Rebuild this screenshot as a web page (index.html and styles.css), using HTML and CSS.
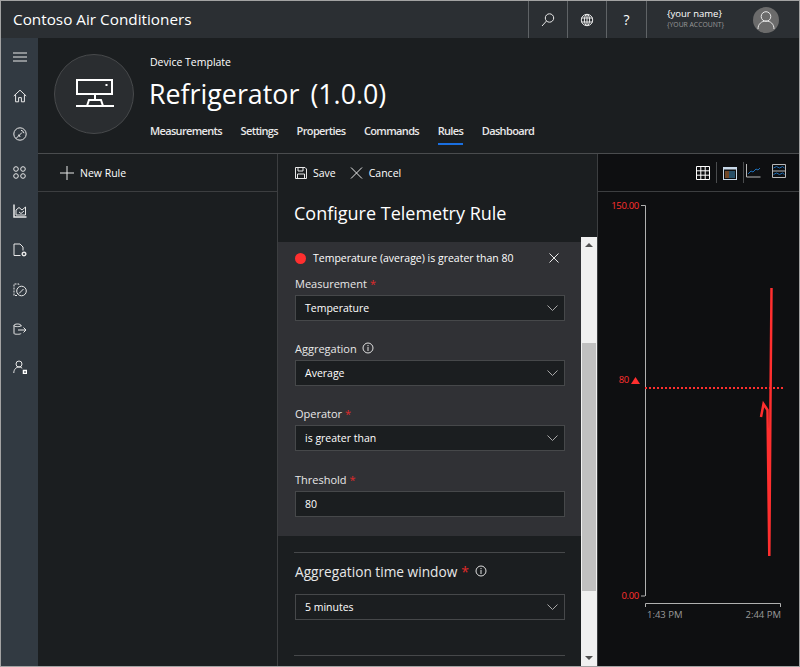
FILE: index.html
```html
<!DOCTYPE html>
<html>

<head>
  <meta charset="UTF-8">
  <title>Contoso Air Conditioners</title>
  <link rel="stylesheet" href="styles.css">
</head>

<body>
  <div class="app">
    <header class="topbar">
      <div class="brand">Contoso Air Conditioners</div>
      <div class="top-btn">
        <svg width="16" height="16" viewBox="0 0 16 16" class="ico"><circle cx="9.5" cy="6" r="4.2"/><path d="M6.5 9L2 14"/></svg>
      </div>
      <div class="top-btn">
        <svg width="14" height="14" viewBox="0 0 14 14" class="ico"><circle cx="7" cy="7" r="5.7"/><ellipse cx="7" cy="7" rx="2.6" ry="5.7"/><path d="M1.3 5h11.4M1.3 9h11.4M7 1.3v11.4"/></svg>
      </div>
      <div class="top-btn help">?</div>
      <div class="account">
        <div class="account-text">
          <div class="account-name">{your name}</div>
          <div class="account-sub">{YOUR ACCOUNT}</div>
        </div>
        <div class="avatar">
          <svg width="20" height="20" viewBox="0 0 20 20" class="ico"><circle cx="10" cy="6.5" r="4.8"/><path d="M2 19c0-5 3.5-8 8-8s8 3 8 8"/></svg>
        </div>
      </div>
    </header>

    <div class="body-row">
      <nav class="sidebar">
        <div class="nav-item"><svg width="14" height="10" viewBox="0 0 14 10" class="ico"><path d="M0 1h14M0 5h14M0 9h14"/></svg></div>
        <div class="nav-item"><svg width="14" height="14" viewBox="0 0 14 14" class="ico"><path d="M.8 7L7 1.2 13.2 7M2.6 5.6v7.2h3V8.6h2.8v4.2h3V5.6"/></svg></div>
        <div class="nav-item"><svg width="14" height="14" viewBox="0 0 14 14" class="ico"><circle cx="7" cy="7" r="6.2"/><path d="M3 11.500L9 5.500M8 3.200a4 4 0 0 1 3 3M5 8a2 2 0 0 1 2 2"/></svg></div>
        <div class="nav-item"><svg width="13" height="13" viewBox="0 0 13 13" class="ico"><circle cx="3" cy="3" r="2.3"/><circle cx="10" cy="3" r="2.3"/><circle cx="3" cy="10" r="2.3"/><circle cx="10" cy="10" r="2.3"/></svg></div>
        <div class="nav-item"><svg width="14" height="14" viewBox="0 0 14 14" class="ico"><path d="M1 .5v12.500h12.500" stroke-width="1.500"/><path d="M3 11V6l3-2.500 3 2.500 3.500-3v8z"/><path d="M6 8l2 1.500 3-2.500"/></svg></div>
        <div class="nav-item"><svg width="14" height="14" viewBox="0 0 14 14" class="ico"><path d="M7.500 12.500H1V1h6l3 3v3.500"/><circle cx="11" cy="11" r="1.800" stroke-width="1.400"/></svg></div>
        <div class="nav-item nav-gap"><svg width="14" height="14" viewBox="0 0 14 14" class="ico"><path d="M4 12.500H1V1h5v1.500" stroke-dasharray="2 1"/><circle cx="8.500" cy="8" r="4.800"/><path d="M6 10.500l4.500-4.500"/></svg></div>
        <div class="nav-item"><svg width="14" height="14" viewBox="0 0 14 14" class="ico"><path d="M1 3.500v8c0 1 7 1 7 0M1 3.500c0-2 7-2 7 0v1M1 3.500c0 1.500 7 1.500 7 0M5 8h8M10.500 5.500L13 8l-2.500 2.500"/></svg></div>
        <div class="nav-item"><svg width="14" height="14" viewBox="0 0 14 14" class="ico"><circle cx="6" cy="4" r="3"/><path d="M.8 13c0-3.500 2.300-6 5.200-6 1.300 0 2.400.4 3.200 1.200"/><rect x="10.500" y="10.500" width="3" height="3" stroke="#fff" stroke-width="1.500"/></svg></div>
      </nav>

      <main class="content">
        <section class="template-head">
          <div class="device-circle">
            <svg width="38" height="29" viewBox="0 0 38 29" class="device-ico"><rect x="1" y="1" width="35" height="14"/><path d="M19 15v6M11 27l2-6h12l2 6zM0 27h11M27 27h11"/><rect x="29.500" y="5" width="2" height="2" fill="#fff" stroke="none"/></svg>
          </div>
          <div class="head-text">
            <div class="crumb">Device Template</div>
            <h1 class="device-name"><span>Refrigerator</span><span>(1.0.0)</span></h1>
            <div class="tabs">
              <a class="tab">Measurements</a>
              <a class="tab">Settings</a>
              <a class="tab">Properties</a>
              <a class="tab">Commands</a>
              <a class="tab active">Rules</a>
              <a class="tab">Dashboard</a>
            </div>
          </div>
        </section>

        <section class="columns">
          <div class="rule-list">
            <div class="new-rule">
              <svg width="14" height="14" viewBox="0 0 14 14" class="ico"><path d="M7 0v14M0 7h14"/></svg>
              <span>New Rule</span>
            </div>
          </div>

          <div class="editor">
            <div class="editor-bar">
              <span class="bar-btn">
                <svg width="12" height="12" viewBox="0 0 12 12" class="ico"><path d="M.5.500h9.500l1.500 1.500v9.500H.5zM3 .5v3.500h5V.5M2.500 11.500V7h7v4.500"/></svg>
                Save
              </span>
              <span class="bar-btn">
                <svg width="13" height="12" viewBox="0 0 13 12" class="ico"><path d="M1 .5l11 11M12 .5l-11 11"/></svg>
                Cancel
              </span>
            </div>
            <h2 class="editor-title">Configure Telemetry Rule</h2>

            <div class="scroll-wrap">
              <div class="form-area">
                <div class="rule-card">
                  <div class="rule-head">
                    <span class="dot"></span>
                    <span class="rule-text">Temperature (average) is greater than 80</span>
                    <svg width="10" height="10" viewBox="0 0 10 10" class="ico close"><path d="M.5.500l9 9M9.500.500l-9 9"/></svg>
                  </div>
                  <label class="field-label first">Measurement <b>*</b></label>
                  <div class="select">Temperature<svg width="11" height="6" viewBox="0 0 11 6" class="chev"><path d="M.5.500l5 5 5-5"/></svg></div>
                  <label class="field-label">Aggregation
                    <svg width="12" height="12" viewBox="0 0 12 12" class="info"><circle cx="6" cy="6" r="5"/><path d="M6 5v4M6 3v1.200"/></svg>
                  </label>
                  <div class="select">Average<svg width="11" height="6" viewBox="0 0 11 6" class="chev"><path d="M.5.500l5 5 5-5"/></svg></div>
                  <label class="field-label">Operator <b>*</b></label>
                  <div class="select">is greater than<svg width="11" height="6" viewBox="0 0 11 6" class="chev"><path d="M.5.500l5 5 5-5"/></svg></div>
                  <label class="field-label last">Threshold <b>*</b></label>
                  <div class="select">80</div>
                </div>
                <div class="section">
                  <div class="section-label">Aggregation time window <b>*</b>
                    <svg width="12" height="12" viewBox="0 0 12 12" class="info"><circle cx="6" cy="6" r="5"/><path d="M6 5v4M6 3v1.200"/></svg>
                  </div>
                  <div class="select">5 minutes<svg width="11" height="6" viewBox="0 0 11 6" class="chev"><path d="M.5.500l5 5 5-5"/></svg></div>
                </div>
                <div class="section"></div>
              </div>
              <div class="scrollbar">
                <div class="arrow up"></div>
                <div class="thumb"></div>
                <div class="arrow down"></div>
              </div>
            </div>
          </div>

          <div class="chart-col">
            <div class="chart-bar">
              <svg width="14" height="14" viewBox="0 0 14 14" class="grid-ico"><path d="M.5.500h13v13H.5zM4.800.500v13M9.200.500v13M.5 4.800h13M.5 9.200h13"/></svg>
              <span class="sep"></span>
              <svg width="14" height="14" viewBox="0 0 14 14" class="cal"><rect x=".5" y="1.500" width="13" height="12" stroke="#c8d8e8"/><path d="M.5 1.500h13v2H.5z" fill="#c8d8e8"/><path d="M3 5v7M5 5v7" stroke="#d08040"/><path d="M7 5v7M9 5v7M11 5v7" stroke="#4090c0"/></svg>
              <span class="sep sep-last"></span>
              <svg width="15" height="14" viewBox="0 0 15 14" class="line-ico"><path d="M.5 0v13h14" stroke="#b8b8b8"/><path d="M2 10l3-3 2 1 3-3 2 1 2-2" stroke="#1e6fb8"/></svg>
              <svg width="14" height="14" viewBox="0 0 14 14" class="band-ico"><path d="M.5.500h13v13H.5zM.5 7h13" stroke="#b8b8b8"/><path d="M1.500 4l3-1.500 3 1.500 3-1.500 2 1.500M1.500 10.500l3-1.500 3 1.500 3-1.500 2 1.500" stroke="#1e6fb8"/></svg>
            </div>
            <svg class="chart" width="201" height="474" viewBox="599 192 201 474">
              <g class="axis">
                <path d="M642 205.500h4.500V596M642 596h4"/>
                <path d="M646.500 607v-3.500h135v3.500"/>
              </g>
              <text class="val" x="640" y="209" text-anchor="end">150.00</text>
              <text class="val" x="630" y="383" text-anchor="end">80</text>
              <path d="M632 384l4.500-7 4.500 7z" fill="#ff2f2f"/>
              <text class="val" x="640" y="599" text-anchor="end">0.00</text>
              <text class="tick" x="648" y="618">1:43 PM</text>
              <text class="tick" x="782" y="618" text-anchor="end">2:44 PM</text>
              <path d="M646 388h138" class="limit"/>
              <path d="M772.500 288L771.500 400 770.300 556 768.500 410 764.500 404 762 417" class="series"/>
            </svg>
          </div>
        </section>
      </main>
    </div>
  </div>
</body>

</html>
```
FILE: styles.css
```css
* {
  box-sizing: border-box;
}

body {
  margin: 0;
  font-family: "Open Sans", "Noto Sans", sans-serif;
  color: #fff;
  background: #1b1e20;
}

.ico {
  fill: none;
  stroke: #e8e8e8;
  stroke-width: 1;
}

.app {
  display: flex;
  flex-direction: column;
  width: 800px;
  height: 667px;
  border: 1px solid #a3a3a3;
  overflow: hidden;
}

/* top bar */
.topbar {
  display: flex;
  height: 37px;
  flex: none;
  background: #2b2f33;
}

.brand {
  flex: 1;
  padding-left: 12px;
  font-size: 15.3px;
  line-height: 37px;
}

.top-btn {
  display: flex;
  align-items: center;
  justify-content: center;
  width: 39px;
  border-left: 1px solid #5f6366;
}

.help {
  width: 40px;
  font-size: 14px;
}

.account {
  display: flex;
  align-items: center;
  justify-content: space-between;
  width: 153px;
  padding: 0 20px 0 20px;
  border-left: 1px solid #5f6366;
}

.account-text {
  margin-top: -3px;
}

.account-name {
  font-size: 9.5px;
  line-height: 13px;
}

.account-sub {
  font-size: 6.8px;
  line-height: 9px;
  color: #9a9a9a;
}

.avatar {
  display: flex;
  align-items: center;
  justify-content: center;
  width: 26px;
  height: 26px;
  border-radius: 50%;
  background: #6b6b6b;
}

.body-row {
  display: flex;
  flex: 1;
  min-height: 0;
}

/* left nav */
.sidebar {
  flex: none;
  width: 37px;
  padding-top: 0;
  background: #323a42;
}

.nav-item {
  display: flex;
  align-items: center;
  justify-content: center;
  height: 38.5px;
}

.nav-gap {
  margin-top: 2px;
}

.content {
  display: flex;
  flex-direction: column;
  flex: 1;
  min-width: 0;
}

/* device header */
.template-head {
  display: flex;
  flex: none;
  height: 116px;
  padding: 16px 0 0 16px;
  border-bottom: 1px solid #4a4c4e;
}

.device-circle {
  display: flex;
  align-items: center;
  justify-content: center;
  flex: none;
  width: 80px;
  height: 80px;
  border: 1px solid #47494b;
  border-radius: 50%;
  background: #2a2d30;
}

.device-ico {
  margin: 0 0 2px 2px;
  fill: none;
  stroke: #fff;
  stroke-width: 2;
}

.head-text {
  margin-left: 16px;
}

.crumb {
  height: 21px;
  font-size: 10.5px;
  line-height: 16px;
}

.device-name {
  display: flex;
  gap: 11px;
  margin: 0 0 0 -1px;
  font-size: 26.8px;
  font-weight: 400;
  line-height: 38px;
}

.tabs {
  display: flex;
  gap: 18.6px;
  margin-top: 10px;
}

.tab {
  padding-bottom: 4px;
  font-size: 11px;
  font-weight: 600;
  letter-spacing: -0.65px;
  line-height: 16px;
  color: #e8e8e8;
}

.tab.active {
  border-bottom: 2px solid #1a6fe0;
}

/* columns under the header */
.columns {
  display: flex;
  flex: 1;
  min-height: 0;
}

.rule-list {
  flex: none;
  width: 240px;
  border-right: 1px solid #3c3e40;
}

.new-rule {
  display: flex;
  align-items: center;
  gap: 6px;
  height: 38px;
  padding-left: 22px;
  font-size: 10.5px;
  border-bottom: 1px solid #3c3e40;
}

.editor {
  display: flex;
  flex-direction: column;
  flex: none;
  width: 320px;
  border-right: 1px solid #3c3e40;
}

.editor-bar {
  display: flex;
  align-items: center;
  gap: 14px;
  flex: none;
  height: 38px;
  padding-left: 17px;
}

.bar-btn {
  display: flex;
  align-items: center;
  gap: 6px;
  font-size: 10.5px;
}

.editor-title {
  flex: none;
  height: 45px;
  margin: 0;
  padding-left: 16px;
  font-size: 18px;
  font-weight: 400;
  line-height: 42px;
}

.scroll-wrap {
  display: flex;
  flex: 1;
  min-height: 0;
}

.form-area {
  flex: none;
  width: 303px;
  padding-top: 5px;
}

.rule-card {
  height: 294px;
  padding: 0 16px 0 17px;
  background: #303135;
}

.rule-head {
  display: flex;
  align-items: center;
  height: 32px;
  font-size: 10.5px;
}

.dot {
  flex: none;
  width: 11px;
  height: 11px;
  margin-right: 7px;
  border-radius: 50%;
  background: #ff2f2f;
}

.rule-text {
  flex: 1;
}

.close {
  margin-right: 6px;
}

.field-label {
  display: flex;
  align-items: center;
  gap: 3px;
  height: 16px;
  margin-top: 19px;
  margin-bottom: 4px;
  font-size: 11px;
  color: #e8e8e8;
}

.field-label.first {
  margin-top: 1px;
}

.field-label.last {
  margin-top: 20px;
}

b {
  font-weight: 400;
  color: #e02a2a;
}

.select {
  display: flex;
  align-items: center;
  justify-content: space-between;
  width: 270px;
  height: 26px;
  padding: 0 6px 0 9px;
  border: 1px solid #46484a;
  background: #1b1e20;
  font-size: 10.5px;
}

.chev {
  fill: none;
  stroke: #a8a8a8;
}

.info {
  fill: none;
  stroke: #e0e0e0;
  margin-left: 2px;
}

.section {
  width: 271px;
  margin: 16px 0 0 16px;
  padding-top: 8px;
  border-top: 1px solid #46484a;
}

.section + .section {
  margin-top: 35px;
}

.section-label {
  display: flex;
  align-items: center;
  gap: 4px;
  height: 20px;
  margin: 0 0 13px 1px;
  font-size: 13.7px;
  color: #e8e8e8;
}

.section-label b {
  font-size: 14px;
}

.section .select {
  margin-left: 1px;
}

/* fake window scrollbar, it is part of the picture */
.scrollbar {
  display: flex;
  flex-direction: column;
  flex: none;
  width: 16px;
  background: #f0f0f0;
}

.arrow {
  flex: none;
  width: 0;
  height: 0;
  margin: 6px 4px;
  border-left: 4px solid transparent;
  border-right: 4px solid transparent;
}

.arrow.up {
  border-bottom: 4px solid #505050;
}

.arrow.down {
  margin-top: auto;
  border-top: 4px solid #505050;
}

.thumb {
  flex: none;
  width: 14px;
  height: 248px;
  margin: 90px 0 0 1px;
  background: #c0c0c0;
}

/* chart */
.chart-col {
  flex: 1;
  min-width: 0;
  background: #0e0f11;
}

.chart-bar {
  display: flex;
  align-items: center;
  height: 38px;
  padding-left: 98px;
  border-bottom: 1px solid #3c3e40;
}

.sep {
  width: 1px;
  height: 21px;
  margin: 0 6px;
  background: #4a4c4e;
}

.sep-last {
  margin-right: 2px;
}

.grid-ico {
  fill: none;
  stroke: #fff;
}

.line-ico,
.band-ico,
.cal {
  fill: none;
}

.line-ico {
  margin-bottom: 4px;
}

.band-ico {
  margin: 0 0 3px 11px;
}

.chart {
  display: block;
}

.axis {
  fill: none;
  stroke: #b0b0b0;
}

.val {
  font-size: 9.5px;
  letter-spacing: -0.3px;
  fill: #ff2f2f;
}

.tick {
  font-size: 9.5px;
  fill: #9a9a9a;
}

.limit {
  stroke: #ff2f2f;
  stroke-width: 2;
  stroke-dasharray: 2 2;
}

.series {
  fill: none;
  stroke: #ff2f2f;
  stroke-width: 2.5;
}
```
